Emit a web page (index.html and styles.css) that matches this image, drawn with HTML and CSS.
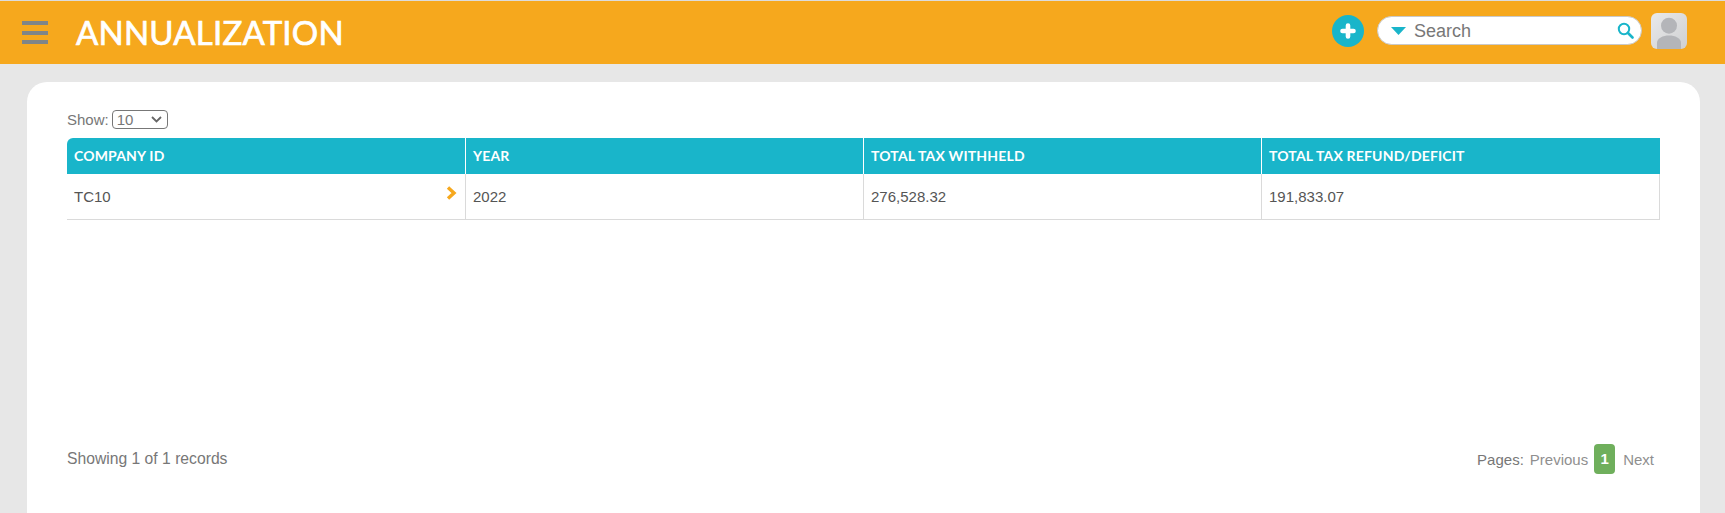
FILE: index.html
```html
<!DOCTYPE html>
<html lang="en">
<head>
<meta charset="utf-8">
<title>Annualization</title>
<link rel="stylesheet" href="styles.css">
</head>
<body>
<header class="topbar">
  <div class="burger"><span></span><span></span><span></span></div>
  <h1 class="title">ANNUALIZATION</h1>
  <div class="tools">
    <svg class="add" width="32" height="32" viewBox="0 0 32 32"><circle cx="16" cy="16" r="16" fill="#19b5ca"/><path d="M16 10.500v11M10.500 16h11" stroke="#fff" stroke-width="4.600" stroke-linecap="round"/></svg>
    <div class="search">
      <svg class="caret" width="15" height="8" viewBox="0 0 15 8"><path d="M0 0h15L7.500 8z" fill="#19b5ca"/></svg>
      <span class="search-text">Search</span>
      <svg class="lens" width="17" height="17" viewBox="0 0 17 17"><circle cx="7" cy="7" r="5.200" fill="none" stroke="#19b5ca" stroke-width="2"/><path d="M11 11l4.500 4.500" stroke="#19b5ca" stroke-width="2.600" stroke-linecap="round"/></svg>
    </div>
    <svg class="avatar" width="36" height="36" viewBox="0 0 36 36">
      <defs><linearGradient id="av" x1="0" y1="0" x2="1" y2="1"><stop offset="0" stop-color="#e9e9ea"/><stop offset="1" stop-color="#cfd0d2"/></linearGradient></defs>
      <rect width="36" height="36" rx="6" fill="url(#av)"/>
      <circle cx="18" cy="12.700" r="8" fill="#b4b5b9"/>
      <path d="M6 36v-6c0-5 6-7.500 12-7.500s12 2.500 12 7.500v6z" fill="#b4b5b9"/>
    </svg>
  </div>
</header>
<main class="card">
  <div class="show"><span>Show:</span><span class="select"><span>10</span><svg width="11" height="7" viewBox="0 0 11 7"><path d="M1 1l4.500 4.500L10 1" fill="none" stroke="#666" stroke-width="1.800"/></svg></span></div>
  <table class="grid">
    <thead>
      <tr><th>COMPANY ID</th><th>YEAR</th><th>TOTAL TAX WITHHELD</th><th>TOTAL TAX REFUND/DEFICIT</th></tr>
    </thead>
    <tbody>
      <tr>
        <td class="first">TC10<svg class="chev" width="11" height="14" viewBox="0 0 11 14"><path d="M2 1.500L8 7l-6 5.500" fill="none" stroke="#f6a81d" stroke-width="3.400"/></svg></td>
        <td>2022</td><td>276,528.32</td><td>191,833.07</td>
      </tr>
    </tbody>
  </table>
  <footer class="foot">
    <span class="summary">Showing 1 of 1 records</span>
    <nav class="pages"><span>Pages:</span><span class="muted">Previous</span><span class="current">1</span><span class="muted">Next</span></nav>
  </footer>
</main>
</body>
</html>
```
FILE: styles.css
```css
* { box-sizing: border-box; }
html, body { margin: 0; height: 100%; }
body {
  height: 513px;
  overflow: hidden;
  background: #e7e7e7;
  font-family: "Liberation Sans", Arial, sans-serif;
  color: #555;
}
.topbar {
  height: 64px;
  border-top: 1px solid #dcdcdc;
  background: #f6a81d;
  display: flex;
  align-items: center;
  padding: 0 0 0 22px;
}
.burger {
  width: 26px;
  display: flex;
  flex-direction: column;
  gap: 5.5px;
}
.burger span { height: 4px; background: #7f8588; }
.title {
  margin: 0 0 0 28px;
  font: 400 33px/1 Lato, sans-serif;
  -webkit-text-stroke: 0.7px #fff;
  color: #fff;
  letter-spacing: 0.2px;
}
.tools {
  margin-left: auto;
  margin-right: 38px;
  margin-bottom: 4px;
  display: flex;
  align-items: center;
}
.add { margin-right: 13px; }
.search {
  width: 265px;
  height: 29px;
  background: #fff;
  border: 1px solid #c9c9c9;
  border-radius: 15px;
  display: flex;
  align-items: center;
  padding: 0 7px 0 13px;
  margin-right: 9px;
}
.search-text {
  margin-left: 8px;
  padding-top: 1px;
  font-size: 18px;
  color: #777;
  flex: 1;
}
.card {
  width: 1673px;
  height: 449px;
  margin: 18px 0 0 27px;
  background: #fff;
  border-radius: 20px 20px 0 0;
  padding: 28px 40px 0;
}
.show {
  height: 28px;
  display: flex;
  align-items: flex-start;
  gap: 3px;
  font-size: 15px;
  line-height: 19px;
  color: #777;
}
.select {
  width: 56px;
  height: 19px;
  border: 1px solid #777;
  border-radius: 4px;
  display: flex;
  align-items: center;
  justify-content: space-between;
  padding: 0 5px 0 4px;
  line-height: 17px;
}
.grid {
  width: 1593px;
  table-layout: fixed;
  border-collapse: separate;
  border-spacing: 0;
}
.grid th {
  width: 398px;
  height: 36px;
  padding: 0 7px;
  background: #19b5ca;
  color: #fff;
  font: 700 14px/1 Lato, sans-serif;
  letter-spacing: 0.17px;
  text-align: left;
  border-left: 1px solid #fff;
}
.grid th:first-child { border-left: 0; border-top-left-radius: 6px; }
.grid th:last-child { width: auto; }
.grid td {
  position: relative;
  height: 46px;
  padding: 0 7px;
  font-size: 15px;
  color: #555;
  border-left: 1px solid #dadada;
  border-bottom: 1px solid #dadada;
}
.grid td:first-child { border-left: 0; }
.grid td:last-child { border-right: 1px solid #dadada; }
.chev { position: absolute; right: 8px; top: 12px; }
.foot {
  margin-top: 224px;
  display: flex;
  justify-content: space-between;
  align-items: center;
  font-size: 15px;
  color: #777;
  width: 1593px;
}
.summary { font-size: 15.7px; }
.pages {
  display: flex;
  align-items: center;
  gap: 6px;
  padding-right: 6px;
}
.muted { color: #8f8f8f; }
.current {
  width: 21px;
  height: 30px;
  margin-right: 2px;
  line-height: 30px;
  text-align: center;
  background: #6faf5c;
  color: #fff;
  font-weight: 700;
  border-radius: 4px;
}
```
